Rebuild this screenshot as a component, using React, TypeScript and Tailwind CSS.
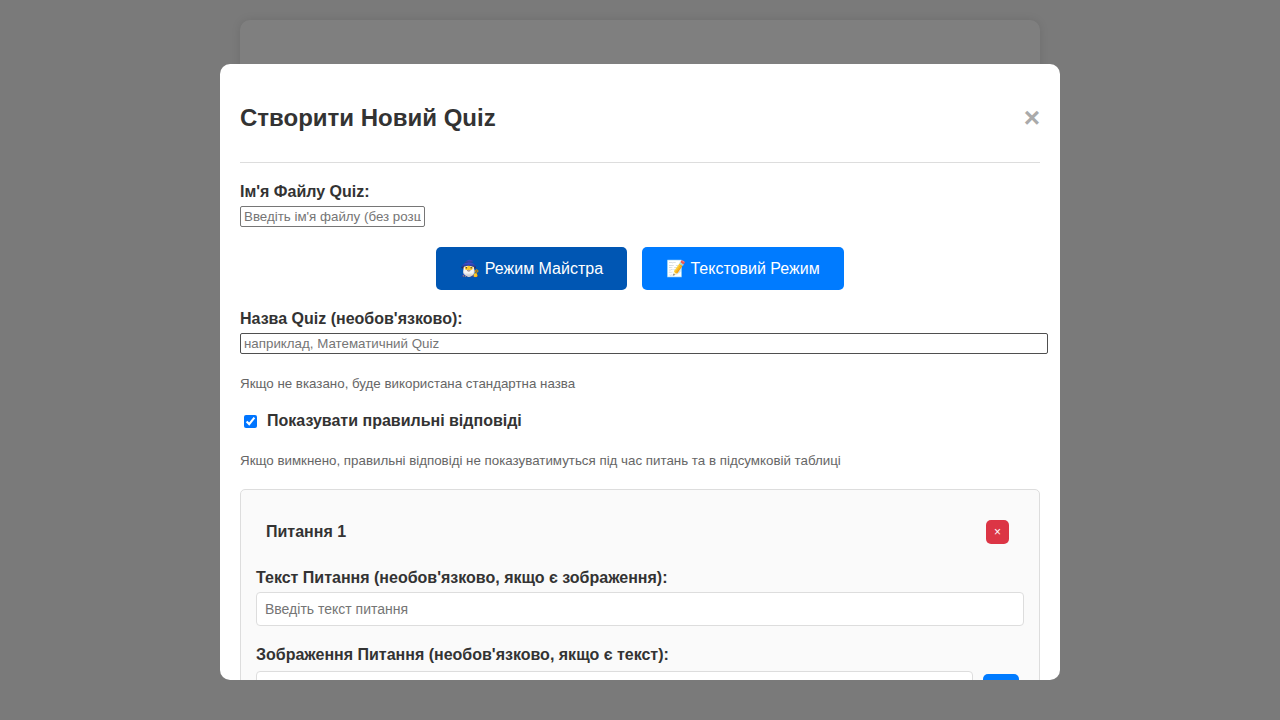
import { useState } from 'react';
import { Folder } from 'lucide-react';

const fieldClass =
  'rounded-[4px] border border-[#dddddd] bg-white px-2 text-sm text-[#333333] placeholder:text-[#757575] outline-none';

type ModeButtonProps = {
  label: string;
  active: boolean;
  onSelect: () => void;
};

function ModeButton({ label, active, onSelect }: ModeButtonProps) {
  return (
    <button
      type="button"
      aria-pressed={active}
      onClick={onSelect}
      className={
        active
          ? 'h-[43px] cursor-pointer rounded-[5px] bg-[#0056b3] px-6 font-[Arial,sans-serif] text-base text-white'
          : 'h-[43px] cursor-pointer rounded-[5px] bg-[#007bff] px-6 font-[Arial,sans-serif] text-base text-white'
      }
    >
      {label}
    </button>
  );
}

function QuestionCard({ number }: { number: number }) {
  return (
    <section className="rounded-[5px] border border-[#dddddd] bg-[#fafafa] px-[15px] pt-[30px] pb-5">
      <div className="flex items-center justify-between pr-[15px] pl-[10px]">
        <h3 className="font-bold">Питання {number}</h3>
        <button
          type="button"
          aria-label="Видалити питання"
          className="h-6 cursor-pointer rounded-[5px] bg-[#dc3545] px-2 text-xs text-white"
        >
          ×
        </button>
      </div>
      <div className="mt-[25px] flex flex-col gap-[5px]">
        <label htmlFor="question-text" className="leading-[18px] font-bold">
          Текст Питання (необов'язково, якщо є зображення):
        </label>
        <input
          id="question-text"
          type="text"
          placeholder="Введіть текст питання"
          className={`h-[34px] w-full ${fieldClass}`}
        />
      </div>
      <div className="mt-5 flex flex-col gap-[7px]">
        <label htmlFor="question-image" className="leading-[18px] font-bold">
          Зображення Питання (необов'язково, якщо є текст):
        </label>
        <div className="flex items-center gap-[10px] pr-[5px]">
          <input id="question-image" type="text" className={`h-10 min-w-0 flex-1 ${fieldClass}`} />
          <button
            type="button"
            aria-label="Вибрати зображення"
            className="flex h-[34px] w-9 cursor-pointer items-center justify-center rounded-[5px] bg-[#007bff] text-white"
          >
            <Folder className="size-4" />
          </button>
        </div>
      </div>
    </section>
  );
}

export default function App() {
  const [mode, setMode] = useState<'wizard' | 'text'>('wizard');

  return (
    <div className="min-h-screen bg-[#f4f4f4] p-5 font-['Liberation_Sans',Arial,sans-serif] text-base text-[#333333]">
      <main className="mx-auto h-[400px] max-w-[800px] rounded-[10px] bg-white shadow-[0_0_10px_rgba(0,0,0,0.1)]" />

      <div className="fixed inset-0 bg-black/50 pt-16 pb-10">
        <div
          role="dialog"
          aria-modal="true"
          aria-labelledby="dialog-title"
          className="mx-auto h-full max-w-[840px] overflow-x-hidden overflow-y-auto rounded-[10px] bg-white p-5 [scrollbar-width:none]"
        >
          <header className="flex items-center justify-between border-b border-[#dddddd] pt-4 pb-[26px]">
            <h2 id="dialog-title" className="text-2xl leading-9 font-bold">
              Створити Новий Quiz
            </h2>
            <button
              type="button"
              aria-label="Закрити"
              className="cursor-pointer text-[28px] leading-8 font-bold text-[#aaaaaa]"
            >
              ×
            </button>
          </header>

          <div className="mt-5 flex flex-col items-start gap-[5px]">
            <label htmlFor="file-name" className="leading-[18px] font-bold">
              Ім'я Файлу Quiz:
            </label>
            <input
              id="file-name"
              type="text"
              placeholder="Введіть ім'я файлу (без розширення)"
              className="h-[21px] w-[185px] rounded-[2px] border border-[#767676] px-[3px] [font-size:smaller] outline-none placeholder:text-[#757575]"
            />
          </div>

          <div className="my-5 flex justify-center gap-[15px]">
            <ModeButton
              label="🧙‍♂️ Режим Майстра"
              active={mode === 'wizard'}
              onSelect={() => setMode('wizard')}
            />
            <ModeButton
              label="📝 Текстовий Режим"
              active={mode === 'text'}
              onSelect={() => setMode('text')}
            />
          </div>

          <div className="flex flex-col gap-[5px]">
            <label htmlFor="quiz-title" className="leading-[18px] font-bold">
              Назва Quiz (необов'язково):
            </label>
            <input
              id="quiz-title"
              type="text"
              placeholder="наприклад, Математичний Quiz"
              className="h-[21px] w-[calc(100%+8px)] rounded-[2px] border border-[#4f4f4f] px-[3px] [font-size:smaller] outline-none placeholder:text-[#757575]"
            />
          </div>
          <p className="mt-5 [font-size:smaller] leading-5 text-[#666666]">
            Якщо не вказано, буде використана стандартна назва
          </p>

          <div className="mt-[18px] flex items-center gap-[10px] pl-1">
            <input
              id="show-answers"
              type="checkbox"
              defaultChecked
              className="size-[13px] accent-[#0075ff]"
            />
            <label htmlFor="show-answers" className="leading-[18px] font-bold">
              Показувати правильні відповіді
            </label>
          </div>
          <p className="mt-[21px] mb-[18px] [font-size:smaller] leading-5 text-[#666666]">
            Якщо вимкнено, правильні відповіді не показуватимуться під час питань та в підсумковій таблиці
          </p>

          <QuestionCard number={1} />
        </div>
      </div>
    </div>
  );
}
